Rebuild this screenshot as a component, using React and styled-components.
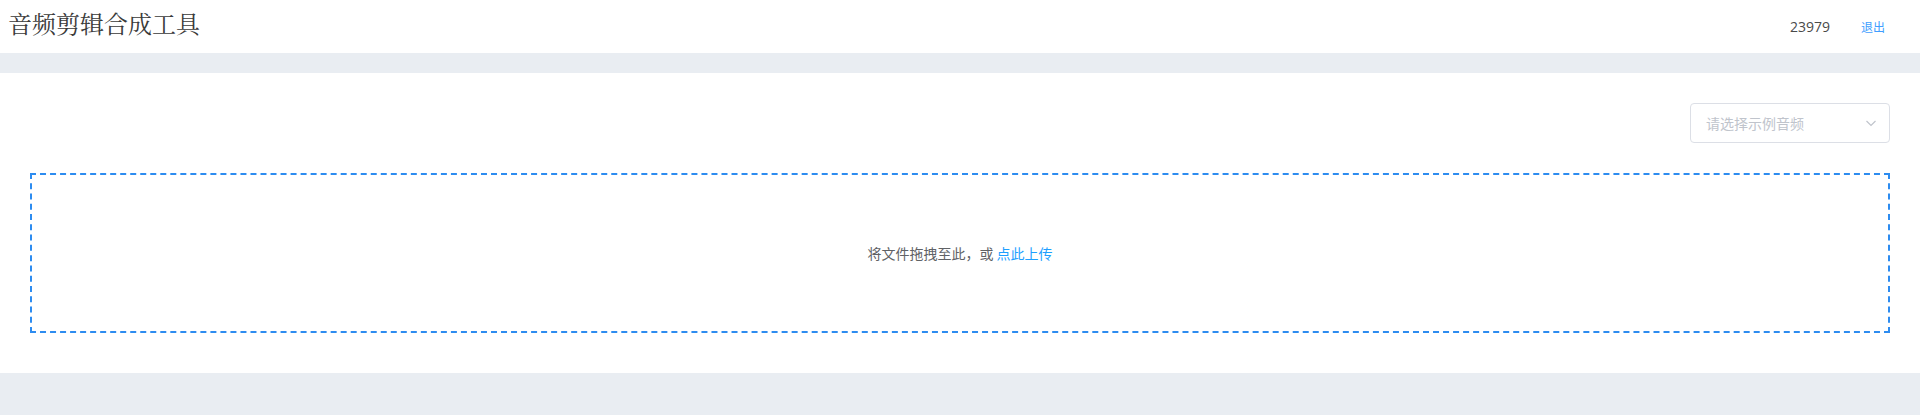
import React, { useState } from "react";
import styled, { createGlobalStyle } from "styled-components";

const GlobalStyle = createGlobalStyle`
  html, body {
    margin: 0;
    padding: 0;
    background: #e9edf2;
  }
  body {
    font-family: "Open Sans", "Noto Sans CJK SC", sans-serif;
  }
`;

// Header
const Header = styled.header`
  display: flex;
  align-items: center;
  justify-content: space-between;
  height: 53px;
  padding: 0 35px 0 8px;
  background: #fff;
  box-sizing: border-box;
`;

const Title = styled.h1`
  margin: 0;
  margin-top: -9px;
  font-family: "Liberation Serif", "Noto Serif CJK SC", serif;
  font-size: 24px;
  font-weight: normal;
  color: #3a3a3a;
`;

const UserBox = styled.div`
  display: flex;
  align-items: center;
  margin-top: -1px;
`;

const UserId = styled.span`
  font-size: 14px;
  color: #4a4a4a;
`;

const Logout = styled.a`
  margin-left: 31px;
  font-family: "Noto Sans CJK SC", sans-serif;
  font-size: 12px;
  color: #409eff;
  cursor: pointer;
`;

// Main
const Main = styled.main`
  margin-top: 20px;
  padding: 30px 30px 40px;
  background: #fff;
`;

const Toolbar = styled.div`
  display: flex;
  justify-content: flex-end;
  margin-bottom: 30px;
`;

const Select = styled.div`
  display: flex;
  align-items: center;
  justify-content: space-between;
  width: 200px;
  height: 40px;
  padding: 0 12px 0 15px;
  border: 1px solid #dcdfe6;
  border-radius: 4px;
  box-sizing: border-box;
  cursor: pointer;
`;

const Placeholder = styled.span`
  font-family: "Noto Sans CJK SC", sans-serif;
  font-size: 14px;
  color: #c0c4cc;
`;

const Dropzone = styled.div`
  display: flex;
  align-items: center;
  justify-content: center;
  height: 160px;
  border: 2px dashed #2d8cf0;
  box-sizing: border-box;
  cursor: pointer;
`;

const DropText = styled.div`
  font-family: "Noto Sans CJK SC", sans-serif;
  font-size: 14px;
  color: #606266;
`;

const UploadLink = styled.em`
  font-style: normal;
  color: #1e9fff;
`;

function Chevron() {
  return (
    <svg width="12" height="12" viewBox="0 0 12 12" fill="none">
      <path d="M1.5 4 L6 8.5 L10.5 4" stroke="#c0c4cc" strokeWidth="1.2" />
    </svg>
  );
}

function App() {
  const [sample] = useState("");

  return (
    <>
      <GlobalStyle />
      <Header>
        <Title>音频剪辑合成工具</Title>
        <UserBox>
          <UserId>23979</UserId>
          <Logout>退出</Logout>
        </UserBox>
      </Header>
      <Main>
        <Toolbar>
          <Select>
            <Placeholder>{sample || "请选择示例音频"}</Placeholder>
            <Chevron />
          </Select>
        </Toolbar>
        <Dropzone>
          <DropText>
            将文件拖拽至此，或 <UploadLink>点此上传</UploadLink>
          </DropText>
        </Dropzone>
      </Main>
    </>
  );
}

export default App;
